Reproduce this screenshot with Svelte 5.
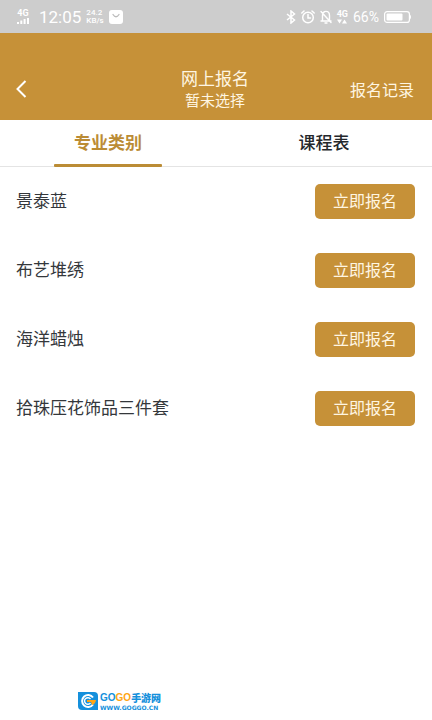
<script lang="ts">
	interface Course {
		id: number;
		name: string;
	}

	const tabs = ['专业类别', '课程表'];

	const courses: Course[] = [
		{ id: 1, name: '景泰蓝' },
		{ id: 2, name: '布艺堆绣' },
		{ id: 3, name: '海洋蜡烛' },
		{ id: 4, name: '拾珠压花饰品三件套' }
	];

	let active = $state(0);
	let selected = $state('暂未选择');
</script>

<div class="page">
	<div class="status">
		<div class="group left">
			<div class="network">
				<span>4G</span>
				<svg width="12" height="6" viewBox="0 0 12 6" fill="#fff" aria-hidden="true">
					<path d="M0 4h2v2H0zM3.300 2.500h2V6h-2zM6.600 1h2v5h-2zM10 0h2v6h-2z" />
				</svg>
			</div>
			<span class="clock">12:05</span>
			<span class="speed">24.2<br />KB/s</span>
			<svg width="14" height="14" viewBox="0 0 14 14" aria-hidden="true">
				<rect width="14" height="14" rx="3" fill="#fff" />
				<path d="M4 4.500q3 4.500 6 0" fill="none" stroke="#bbb" stroke-width="1.300" stroke-linecap="round" />
			</svg>
		</div>

		<div class="group right">
			<svg width="10" height="14" viewBox="0 0 10 14" fill="none" stroke="#fff" stroke-width="1.500" aria-hidden="true">
				<path d="M1 4l7.500 6L5 13V1l3.500 3L1 10" />
			</svg>
			<svg width="14" height="14" viewBox="0 0 14 14" fill="none" stroke="#fff" stroke-width="1.500" stroke-linecap="round" aria-hidden="true">
				<circle cx="7" cy="7.500" r="5.300" />
				<path d="M7 4.500V8h2.500M.8 3L3 1M13.200 3L11 1" />
			</svg>
			<svg width="12" height="14" viewBox="0 0 12 14" fill="none" stroke="#fff" stroke-width="1.400" stroke-linecap="round" aria-hidden="true">
				<path d="M2.500 10.500V5.500C2.500 0 9.500 0 9.500 5.500v5M1 11h10M5 13h2M1 1.500l10 11" />
			</svg>
			<div class="network">
				<span>4G</span>
				<svg width="10" height="5" viewBox="0 0 10 5" fill="#fff" aria-hidden="true">
					<path d="M0 .5h5L2.500 4.500zM5 4.500h5L7.500.5z" />
				</svg>
			</div>
			<span class="percent">66%</span>
			<svg width="28" height="12" viewBox="0 0 28 12" aria-hidden="true">
				<rect x=".6" y=".6" width="24.800" height="10.800" rx="2.500" fill="none" stroke="#fff" stroke-width="1.200" />
				<rect x="2.500" y="2.500" width="16" height="7" rx="1" fill="#fff" />
				<path d="M26 3.500q2 2.500 0 5z" fill="#fff" />
			</svg>
		</div>
	</div>

	<header>
		<button type="button" class="back" aria-label="返回">
			<svg width="11" height="18" viewBox="0 0 11 18" fill="none" stroke="#fff" stroke-width="2" aria-hidden="true">
				<path d="M9.500 1L1.500 9l8 8" />
			</svg>
		</button>
		<div class="title">
			<h1>网上报名</h1>
			<p>{selected}</p>
		</div>
		<a href="#records">报名记录</a>
	</header>

	<div class="tabs" role="tablist">
		{#each tabs as tab, index (tab)}
			<button
				type="button"
				role="tab"
				class:active={index === active}
				aria-selected={index === active}
				onclick={() => (active = index)}
			>
				{tab}
			</button>
		{/each}
	</div>

	<ul>
		{#each courses as course (course.id)}
			<li>
				<span>{course.name}</span>
				<button type="button" onclick={() => (selected = course.name)}>立即报名</button>
			</li>
		{/each}
	</ul>

	<footer>
		<svg width="20" height="18" viewBox="0 0 20 18" aria-hidden="true">
			<path d="M0 0h16q4 0 4 4v14H4q-4 0-4-4z" fill="#1590dc" />
			<path d="M15 5.500A6 6 0 1 0 15 12.500" fill="none" stroke="#fff" stroke-width="2" />
			<path d="M12.500 7A3.300 3.300 0 1 0 12.500 11" fill="none" stroke="#fff" stroke-width="1.400" />
			<path d="M9 8h9q-.5 4-4 5l-1-3H9z" fill="#ffa514" />
		</svg>
		<div>
			<div class="name"><b>GO</b><b class="orange">GO</b><span>手游网</span></div>
			<div class="domain">WWW.GOGGO.CN</div>
		</div>
	</footer>
</div>

<style>
	:global(body) {
		margin: 0;
		background: #fff;
	}

	.page {
		--gold: #c69138;
		display: flex;
		flex-direction: column;
		min-height: 100vh;
		color: #34373b;
		font-family: 'Noto Sans CJK SC', sans-serif;
	}

	button {
		border: 0;
		padding: 0;
		background: none;
		color: inherit;
		font: inherit;
		cursor: pointer;
	}

	.status {
		display: flex;
		justify-content: space-between;
		align-items: center;
		box-sizing: border-box;
		height: 33px;
		padding: 0 20px 0 17px;
		background: #cdcdcd;
		color: #fff;
		font-family: Roboto, sans-serif;
	}

	.group {
		display: flex;
		align-items: center;
		gap: 5px;
	}

	.network {
		display: flex;
		flex-direction: column;
		align-items: center;
		font-size: 9px;
		font-weight: 700;
		line-height: 9px;
	}

	.left .network {
		margin-right: 5px;
	}

	.clock {
		font-size: 17px;
		line-height: 20px;
	}

	.speed {
		font-size: 8px;
		font-weight: 500;
		line-height: 8px;
	}

	.percent {
		font-size: 14px;
		line-height: 16px;
	}

	header {
		display: grid;
		grid-template-columns: 1fr auto 1fr;
		align-items: center;
		padding: 33px 18px 9px 16px;
		background: var(--gold);
		color: #fff6e2;
	}

	.back {
		display: flex;
		justify-self: start;
	}

	.title {
		text-align: center;
	}

	h1,
	p {
		margin: 0;
		font-weight: 400;
	}

	h1 {
		font-size: 17px;
		line-height: 23px;
	}

	p {
		font-size: 15px;
		line-height: 22px;
	}

	header a {
		justify-self: end;
		color: inherit;
		font-size: 16px;
		line-height: 24px;
		text-decoration: none;
	}

	.tabs {
		display: flex;
		border-bottom: 1px solid #e4e4e4;
	}

	.tabs button {
		position: relative;
		flex: 1;
		height: 46px;
		padding-bottom: 4px;
		color: #24272b;
		font-size: 17px;
		font-weight: 500;
	}

	.tabs .active {
		color: #bb8c35;
		font-weight: 700;
	}

	.tabs .active::after {
		content: '';
		position: absolute;
		right: 25%;
		bottom: -1px;
		left: 25%;
		height: 3px;
		border-radius: 1px;
		background: #bb8c35;
	}

	ul {
		margin: 0;
		padding: 0;
		list-style: none;
	}

	li {
		display: flex;
		justify-content: space-between;
		align-items: center;
		height: 69px;
		padding: 0 17px 0 16px;
		font-size: 17px;
	}

	li span {
		padding-bottom: 4px;
	}

	li button {
		width: 100px;
		height: 35px;
		padding-bottom: 4px;
		border-radius: 5px;
		background: var(--gold);
		color: #fff6e2;
		font-size: 16px;
	}

	footer {
		display: flex;
		align-items: center;
		gap: 2px;
		margin-top: auto;
		padding: 0 0 9px 78px;
		color: #1590dc;
	}

	.name {
		display: flex;
		align-items: center;
		font-size: 10px;
		font-weight: 900;
		line-height: 14px;
	}

	.name b {
		font-family: 'Liberation Sans', sans-serif;
		font-weight: 700;
	}

	.name .orange {
		color: #ffa514;
	}

	.domain {
		font-family: 'DejaVu Sans', sans-serif;
		font-size: 6px;
		font-weight: 700;
		line-height: 6px;
	}
</style>
